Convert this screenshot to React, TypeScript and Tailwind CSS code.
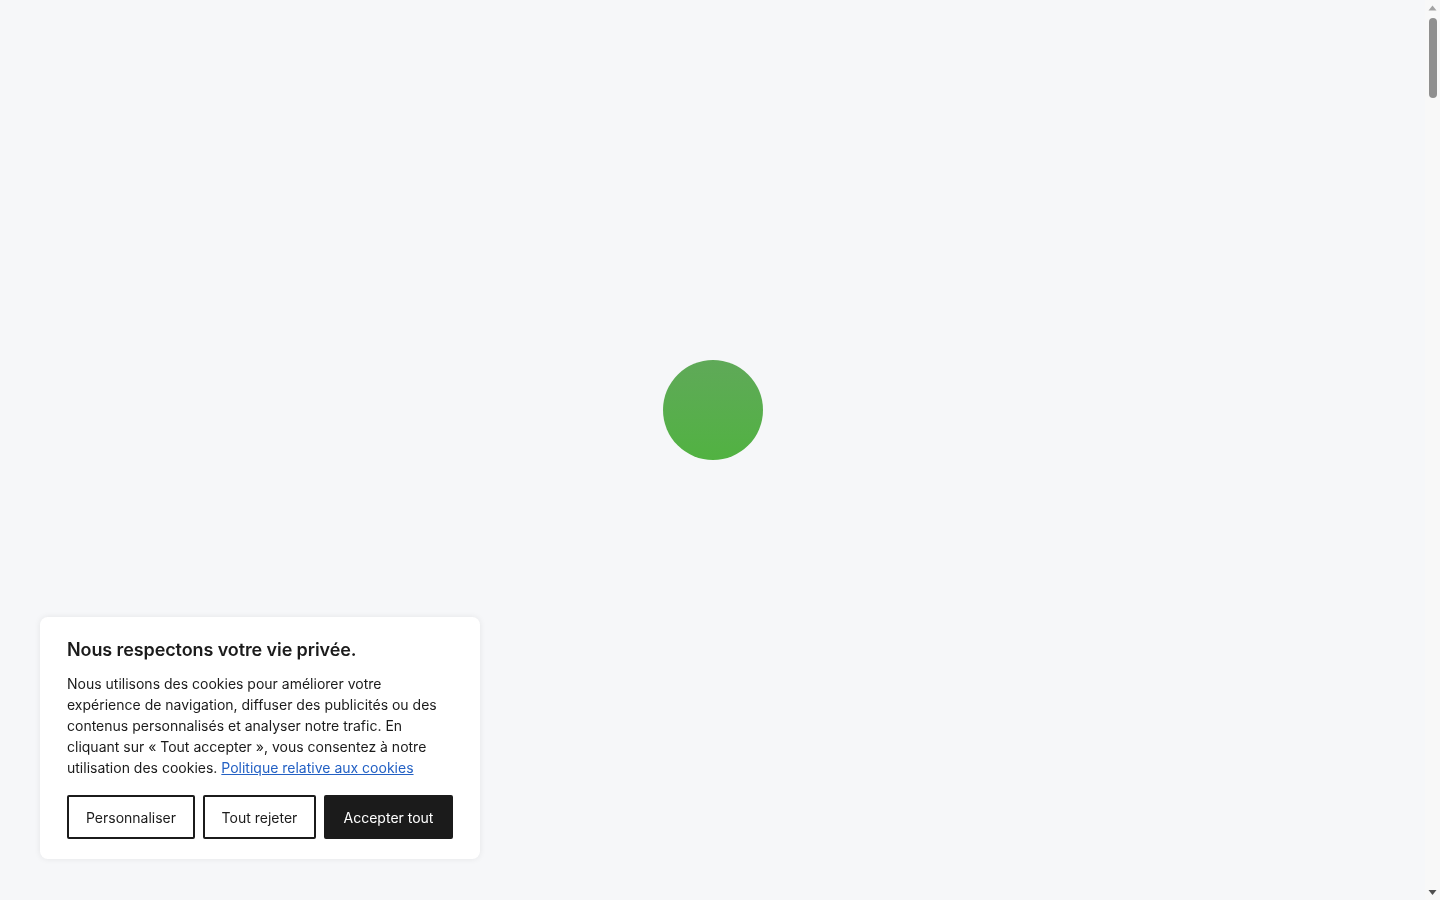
import React from "react";

function Spinner() {
  return (
    <div className="flex h-[820px] items-center justify-center">
      <div className="h-[100px] w-[100px] rounded-full bg-gradient-to-b from-[#5fa958] to-[#51b241]" />
    </div>
  );
}

// stand-in for the browser's classic scrollbar seen in the screenshot
function ScrollTrack() {
  return (
    <div className="flex h-screen w-[15px] shrink-0 flex-col items-center bg-[#f8f8f8]">
      <svg width="15" height="15" viewBox="0 0 15 15" className="shrink-0">
        <path d="M3.5 10.5 L7.5 5.5 L11.5 10.5 Z" fill="#a3a3a3" />
      </svg>
      <div className="mt-[3px] h-[80px] w-[8px] rounded-full bg-[#8f8f8f]" />
      <div className="flex-1" />
      <svg width="15" height="15" viewBox="0 0 15 15" className="shrink-0">
        <path d="M3.5 5 L7.5 10 L11.5 5 Z" fill="#505050" />
      </svg>
    </div>
  );
}

function CookieBanner() {
  return (
    <div className="fixed bottom-[41px] left-[40px] w-[440px] rounded-lg bg-white px-[27px] pb-[20px] pt-[21px] shadow-[0_0_6px_rgba(0,0,0,0.08)]">
      <h2 className="text-[18px] font-semibold leading-[24px] tracking-[-0.1px] text-[#1b1b1b]">
        Nous respectons votre vie privée.
      </h2>
      <p className="mt-[11px] text-[14px] leading-[21px] text-[#1b1b1b]">
        Nous utilisons des cookies pour améliorer votre expérience de
        navigation, diffuser des publicités ou des contenus personnalisés et
        analyser notre trafic. En cliquant sur « Tout accepter », vous
        consentez à notre utilisation des cookies.{" "}
        <a href="#" className="text-[#2461c4] underline">
          Politique relative aux cookies
        </a>
      </p>
      <div className="mt-[17px] flex gap-2">
        <button className="h-[44px] w-[128px] rounded-[2px] border-2 border-[#1b1b1b] bg-white text-[14px] text-[#1b1b1b]">
          Personnaliser
        </button>
        <button className="h-[44px] w-[113px] rounded-[2px] border-2 border-[#1b1b1b] bg-white text-[14px] text-[#1b1b1b]">
          Tout rejeter
        </button>
        <button className="h-[44px] w-[129px] rounded-[2px] border-2 border-[#1b1b1b] bg-[#1b1b1b] text-[14px] text-white">
          Accepter tout
        </button>
      </div>
    </div>
  );
}

export default function App() {
  return (
    <div
      className="flex h-screen overflow-hidden bg-[#f6f7f9]"
      style={{ fontFamily: "Inter, 'Noto Sans', sans-serif" }}
    >
      <main className="flex-1">
        <Spinner />
      </main>
      <ScrollTrack />
      <CookieBanner />
    </div>
  );
}
